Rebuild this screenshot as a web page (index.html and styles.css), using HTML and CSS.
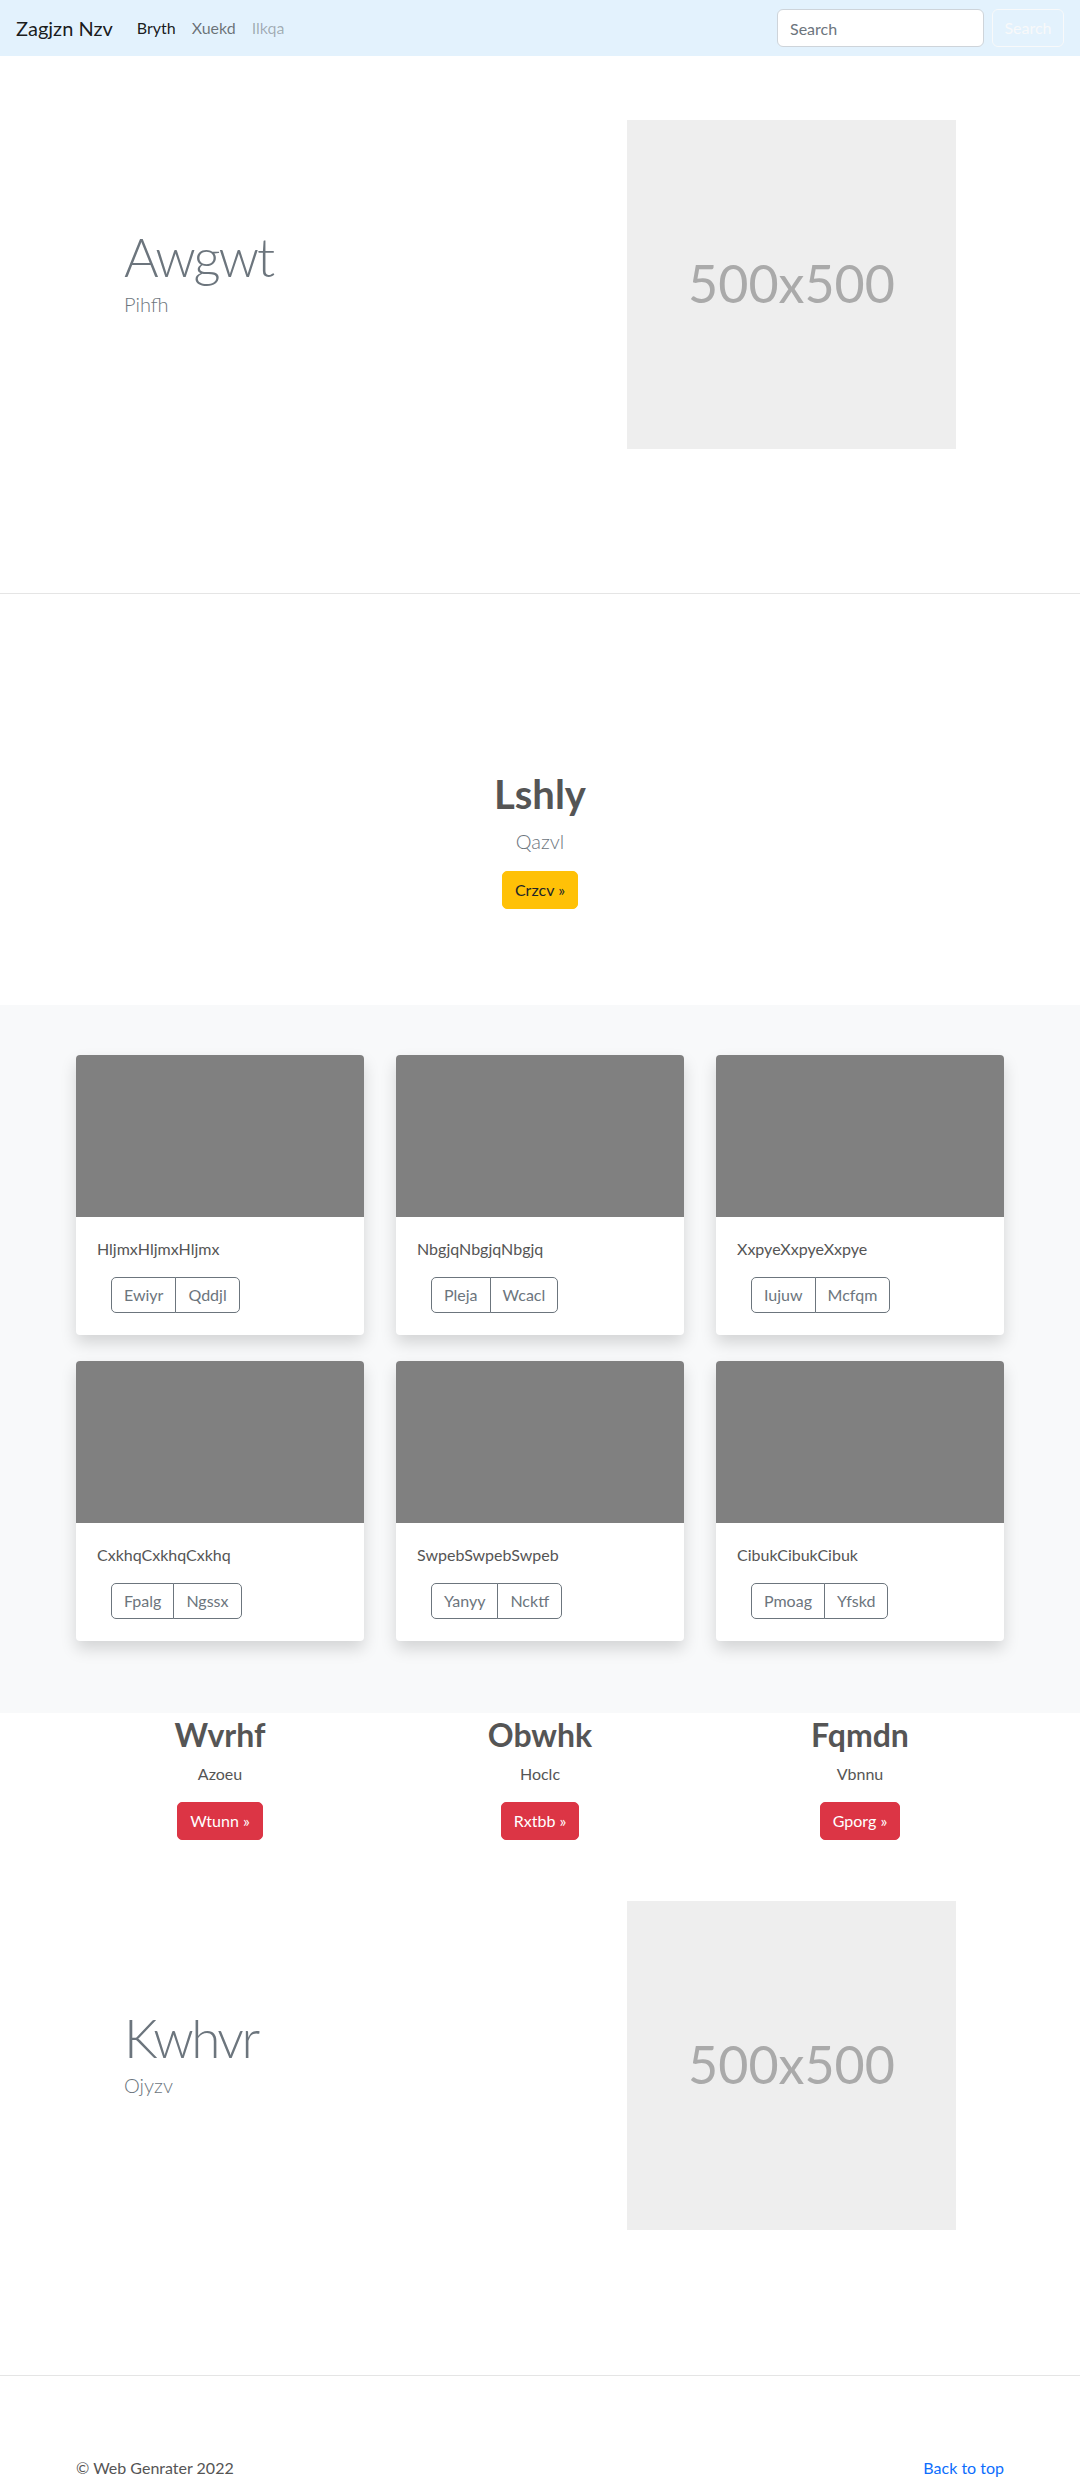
FILE: index.html
```html
<!DOCTYPE html>
<html lang="en">
<head>
<meta charset="utf-8">
<title>Zagjzn Nzv</title>
<link rel="stylesheet" href="styles.css">
</head>
<body>
<nav class="navbar">
  <a class="brand" href="#">Zagjzn Nzv</a>
  <ul class="nav-links">
    <li><a class="nav-link active" href="#">Bryth</a></li>
    <li><a class="nav-link" href="#">Xuekd</a></li>
    <li><a class="nav-link disabled" href="#">Ilkqa</a></li>
  </ul>
  <form class="search">
    <input class="search-input" type="search" placeholder="Search">
    <button class="btn-search" type="button">Search</button>
  </form>
</nav>

<section class="hero">
  <div class="hero-inner">
    <div class="hero-text">
      <h1 class="display">Awgwt</h1>
      <p class="lead">Pihfh</p>
    </div>
    <div class="hero-media">
      <div class="placeholder">500x500</div>
    </div>
  </div>
</section>

<section class="callout">
  <h2 class="callout-title">Lshly</h2>
  <p class="lead">Qazvl</p>
  <a class="btn btn-warning" href="#">Crzcv &raquo;</a>
</section>

<section class="album">
  <div class="card-grid">
    <div class="card">
      <div class="card-img"></div>
      <div class="card-body">
        <p class="card-text">HljmxHljmxHljmx</p>
        <div class="btn-group"><button class="btn-outline">Ewiyr</button><button class="btn-outline">Qddjl</button></div>
      </div>
    </div>
    <div class="card">
      <div class="card-img"></div>
      <div class="card-body">
        <p class="card-text">NbgjqNbgjqNbgjq</p>
        <div class="btn-group"><button class="btn-outline">Pleja</button><button class="btn-outline">Wcacl</button></div>
      </div>
    </div>
    <div class="card">
      <div class="card-img"></div>
      <div class="card-body">
        <p class="card-text">XxpyeXxpyeXxpye</p>
        <div class="btn-group"><button class="btn-outline">Iujuw</button><button class="btn-outline">Mcfqm</button></div>
      </div>
    </div>
    <div class="card">
      <div class="card-img"></div>
      <div class="card-body">
        <p class="card-text">CxkhqCxkhqCxkhq</p>
        <div class="btn-group"><button class="btn-outline">Fpalg</button><button class="btn-outline">Ngssx</button></div>
      </div>
    </div>
    <div class="card">
      <div class="card-img"></div>
      <div class="card-body">
        <p class="card-text">SwpebSwpebSwpeb</p>
        <div class="btn-group"><button class="btn-outline">Yanyy</button><button class="btn-outline">Ncktf</button></div>
      </div>
    </div>
    <div class="card">
      <div class="card-img"></div>
      <div class="card-body">
        <p class="card-text">CibukCibukCibuk</p>
        <div class="btn-group"><button class="btn-outline">Pmoag</button><button class="btn-outline">Yfskd</button></div>
      </div>
    </div>
  </div>
</section>

<section class="features">
  <div class="feature">
    <h2 class="feature-title">Wvrhf</h2>
    <p class="feature-text">Azoeu</p>
    <a class="btn btn-danger" href="#">Wtunn &raquo;</a>
  </div>
  <div class="feature">
    <h2 class="feature-title">Obwhk</h2>
    <p class="feature-text">Hoclc</p>
    <a class="btn btn-danger" href="#">Rxtbb &raquo;</a>
  </div>
  <div class="feature">
    <h2 class="feature-title">Fqmdn</h2>
    <p class="feature-text">Vbnnu</p>
    <a class="btn btn-danger" href="#">Gporg &raquo;</a>
  </div>
</section>

<section class="hero hero-second">
  <div class="hero-inner">
    <div class="hero-text">
      <h1 class="display">Kwhvr</h1>
      <p class="lead">Ojyzv</p>
    </div>
    <div class="hero-media">
      <div class="placeholder">500x500</div>
    </div>
  </div>
</section>

<footer class="footer">
  <div class="footer-inner">
    <p class="copy">&copy; Web Genrater 2022</p>
    <a class="back-top" href="#">Back to top</a>
  </div>
</footer>
</body>
</html>
```

FILE: styles.css
```css
* { box-sizing: border-box; }

body {
  margin: 0;
  font-family: Lato, "Open Sans", "Noto Sans", sans-serif;
  font-size: 16px;
  line-height: 1.5;
  color: #212529;
  background: #fff;
}

a { text-decoration: none; }
p { margin: 0; }
h1, h2 { margin: 0; }

/* Navbar */
.navbar {
  height: 56px;
  background: #e3f2fd;
  display: flex;
  align-items: center;
  padding: 0 16px;
}
.brand {
  font-size: 20px;
  line-height: 30px;
  color: rgba(0, 0, 0, 0.9);
  margin-right: 16px;
}
.nav-links {
  list-style: none;
  display: flex;
  margin: 0;
  padding: 0;
  flex: 1;
}
.nav-link {
  display: block;
  padding: 8px;
  color: rgba(0, 0, 0, 0.55);
}
.nav-link.active { color: rgba(0, 0, 0, 0.9); }
.nav-link.disabled { color: rgba(0, 0, 0, 0.3); }

.search {
  display: flex;
  gap: 8px;
}
.search-input {
  width: 207px;
  height: 38px;
  padding: 6px 12px;
  font: inherit;
  font-size: 16px;
  color: #212529;
  background: #fff;
  border: 1px solid #ced4da;
  border-radius: 6px;
}
.search-input::placeholder { color: #6c757d; }
.btn-search {
  width: 72px;
  height: 38px;
  font: inherit;
  font-size: 16px;
  color: #f8f9fa;
  background: transparent;
  border: 1px solid #f8f9fa;
  border-radius: 6px;
}

/* Hero */
.hero {
  padding: 64px 0 144px;
  border-bottom: 1px solid #e5e5e5;
}
.hero-second { padding-top: 61px; padding-bottom: 145px; }
.hero-inner {
  width: 960px;
  margin: 0 auto;
  display: flex;
}
.hero-text {
  width: 480px;
  padding-left: 64px;
  padding-top: 105px;
}
.display {
  font-size: 53px;
  font-weight: 300;
  line-height: 1.2;
  letter-spacing: -2px;
  color: #6c757d;
}
.hero-second .display { letter-spacing: -2.5px; }
.lead {
  font-size: 20px;
  font-weight: 300;
  line-height: 1.5;
  color: #6c757d;
}
.hero-media {
  width: 480px;
  padding-left: 87px;
}
.placeholder {
  width: 329px;
  height: 329px;
  background: #eee;
  color: #aaa;
  display: flex;
  align-items: center;
  justify-content: center;
  font-size: 52px;
  line-height: 1;
  padding-bottom: 4px;
}

/* Callout */
.callout {
  padding: 176px 0 96px;
  text-align: center;
}
.callout-title {
  font-size: 40px;
  font-weight: 700;
  line-height: 1.2;
  color: #555;
  margin-bottom: 8px;
}
.callout .lead { margin-bottom: 15px; }

.btn {
  display: inline-block;
  padding: 6px 12px;
  font-size: 16px;
  line-height: 24px;
  border: 1px solid transparent;
  border-radius: 5px;
}
.btn-warning { background: #ffc107; border-color: #ffc107; color: #212529; }
.btn-danger { background: #dc3545; border-color: #dc3545; color: #fff; }

/* Album */
.album {
  background: #f8f9fa;
  padding: 50px 0 72px;
}
.card-grid {
  width: 928px;
  margin: 0 auto;
  display: grid;
  grid-template-columns: repeat(3, 288px);
  column-gap: 32px;
  row-gap: 26px;
}
.card {
  height: 280px;
  background: #fff;
  border-radius: 4px;
  overflow: hidden;
  box-shadow: 0 8px 16px rgba(0, 0, 0, 0.15);
}
.card-img {
  height: 162px;
  background: #808080;
}
.card-body {
  padding: 20px 21px 21px;
}
.card-text {
  color: #555;
  line-height: 24px;
  margin-bottom: 16px;
}
.btn-group {
  display: inline-flex;
  margin-left: 14px;
}
.btn-outline {
  font: inherit;
  font-size: 16px;
  line-height: 24px;
  padding: 5px 12px;
  background: #fff;
  color: #6c757d;
  border: 1px solid #6c757d;
}
.btn-outline:first-child { border-radius: 5px 0 0 5px; }
.btn-outline:last-child { border-radius: 0 5px 5px 0; margin-left: -1px; }

/* Features */
.features {
  width: 960px;
  margin: 3px auto 0;
  display: grid;
  grid-template-columns: repeat(3, 1fr);
  text-align: center;
}
.feature-title {
  font-size: 32px;
  font-weight: 700;
  line-height: 38px;
  color: #555;
  margin-bottom: 8px;
}
.feature-text {
  color: #555;
  margin-bottom: 16px;
}

/* Footer */
.footer {
  padding-top: 80px;
}
.footer-inner {
  width: 928px;
  margin: 0 auto;
  display: flex;
  justify-content: space-between;
}
.copy { color: #555; }
.back-top { color: #0d6efd; }
```
